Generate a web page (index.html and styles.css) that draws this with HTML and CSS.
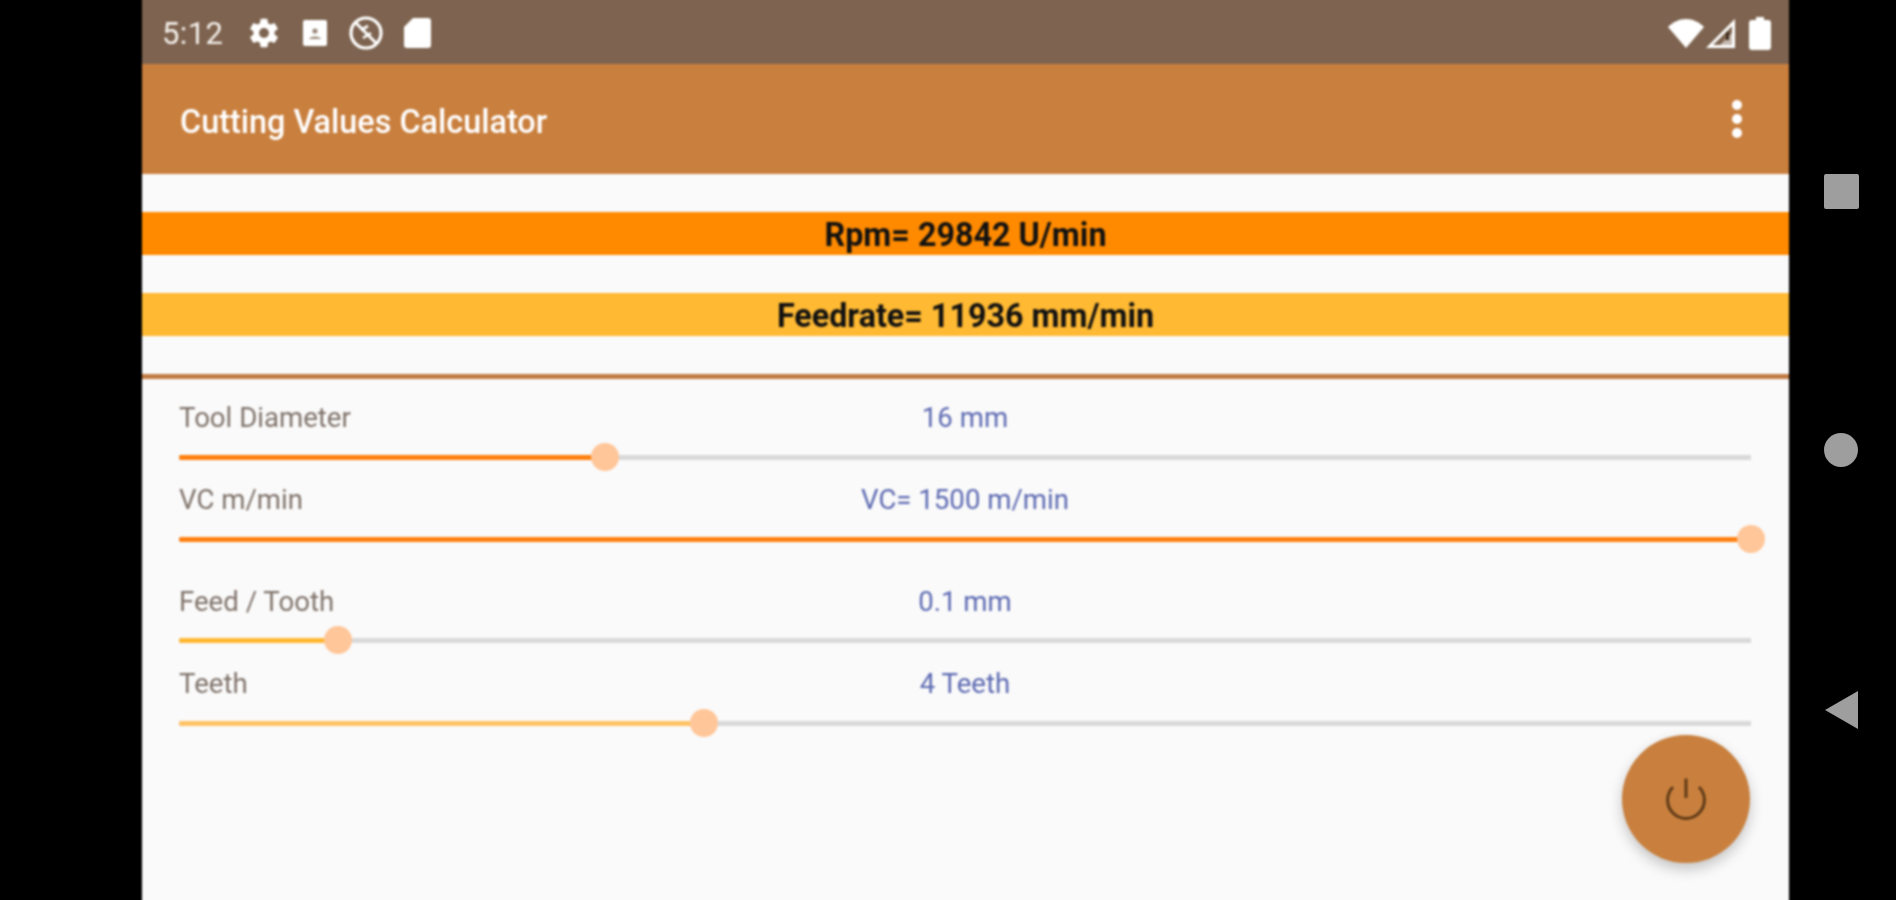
FILE: index.html
```html
<!DOCTYPE html>
<html lang="en">
<head>
<meta charset="utf-8">
<title>Cutting Values Calculator</title>
<link rel="stylesheet" href="styles.css">
</head>
<body>
<div class="device">
  <main class="screen">
    <header class="status">
      <span class="clock">5:12</span>
      <svg class="ic ic-gear" viewBox="0 0 24 24"><path fill="#fff" d="M19.4 13c.04-.32.1-.65.1-1s-.06-.68-.1-1l2.1-1.65c.2-.15.25-.42.12-.64l-2-3.46c-.12-.22-.39-.3-.61-.22l-2.49 1c-.52-.4-1.08-.73-1.69-.98l-.38-2.65A.49.49 0 0 0 14 2h-4c-.25 0-.46.18-.49.42l-.38 2.65c-.61.25-1.17.59-1.69.98l-2.49-1c-.23-.09-.49 0-.61.22l-2 3.46c-.13.22-.07.49.12.64L4.57 11c-.04.32-.07.65-.07 1s.03.68.07 1l-2.11 1.65c-.19.15-.25.42-.12.64l2 3.46c.12.22.39.3.61.22l2.49-1c.52.4 1.08.73 1.69.98l.38 2.65c.03.24.24.42.49.42h4c.25 0 .46-.18.49-.42l.38-2.65c.61-.25 1.17-.59 1.69-.98l2.49 1c.23.09.49 0 .61-.22l2-3.46c.12-.22.07-.49-.12-.64L19.4 13zM12 15.500a3.500 3.500 0 1 1 0-7 3.500 3.500 0 0 1 0 7z"/></svg>
      <svg class="ic ic-box" viewBox="0 0 24 26"><rect width="24" height="26" rx="2" fill="#fff"/><circle cx="12" cy="11" r="2.6" fill="#9a8a7c"/><path d="M6 19c1-3.500 11-3.500 12 0z" fill="#9a8a7c"/></svg>
      <svg class="ic ic-nope" viewBox="0 0 34 34"><g fill="none" stroke="#fff"><circle cx="17" cy="17" r="15" stroke-width="3.2"/><path d="M7 7l20 20" stroke-width="3"/><path d="M12 14l7-4M14 22l8-5" stroke-width="2.6"/></g></svg>
      <svg class="ic ic-sd" viewBox="0 0 27 30"><path fill="#fff" d="M9 0h15a3 3 0 0 1 3 3v24a3 3 0 0 1-3 3H3a3 3 0 0 1-3-3V9z"/></svg>
      <span class="status-gap"></span>
      <svg class="ic ic-wifi" viewBox="0 0 36 29"><path fill="#fff" d="M18 29 0 8C5 3 11 0 18 0s13 3 18 8z"/></svg>
      <svg class="ic ic-signal" viewBox="0 0 29 29"><path fill="none" stroke="#fff" stroke-width="3" d="M3.500 27.500 27.500 3.500v24z"/><path fill="#fff" d="M13 27 26 14v13z" opacity=".55"/><path fill="#3d2a1c" d="M20 13h3v8h-3z"/></svg>
      <svg class="ic ic-batt" viewBox="0 0 22 33"><path fill="#fff" d="M7 0h8v3h4a3 3 0 0 1 3 3v24a3 3 0 0 1-3 3H3a3 3 0 0 1-3-3V6a3 3 0 0 1 3-3h4z"/></svg>
    </header>

    <div class="appbar">
      <h1 class="title">Cutting Values Calculator</h1>
      <div class="menu"><i></i><i></i><i></i></div>
    </div>

    <section class="results">
      <div class="result result-rpm">Rpm= 29842 U/min</div>
      <div class="result result-feed">Feedrate= 11936 mm/min</div>
    </section>

    <section class="controls">
      <div class="row row-first">
        <div class="row-head"><span class="label">Tool Diameter</span><span class="value">16 mm</span><span></span></div>
        <div class="slider slider-orange"><div class="fill" style="width:27.1%"><span class="thumb"></span></div></div>
      </div>
      <div class="row">
        <div class="row-head"><span class="label">VC m/min</span><span class="value">VC= 1500 m/min</span><span></span></div>
        <div class="slider slider-orange"><div class="fill" style="width:100%"><span class="thumb"></span></div></div>
      </div>
      <div class="row row-spaced">
        <div class="row-head"><span class="label">Feed / Tooth</span><span class="value">0.1 mm</span><span></span></div>
        <div class="slider slider-yellow"><div class="fill" style="width:10.1%"><span class="thumb"></span></div></div>
      </div>
      <div class="row row-last">
        <div class="row-head"><span class="label">Teeth</span><span class="value">4 Teeth</span><span></span></div>
        <div class="slider slider-light"><div class="fill" style="width:33.4%"><span class="thumb"></span></div></div>
      </div>
    </section>

    <button class="fab" type="button" aria-label="Power">
      <svg viewBox="0 0 44 44" width="44" height="44"><g fill="none" stroke="#5f3a17" stroke-width="3"><path d="M22 1.500V21"/><path d="M9 10a18.400 18.400 0 1 0 26 0"/></g></svg>
    </button>
  </main>

  <nav class="nav">
    <span class="nav-square"></span>
    <span class="nav-circle"></span>
    <svg class="nav-back" viewBox="0 0 33 38"><path fill="#9e9e9e" d="M33 0v38L0 19z"/></svg>
  </nav>
</div>
</body>
</html>
```

FILE: styles.css
```css
* { box-sizing: border-box; }

html, body {
  margin: 0;
  height: 100%;
  background: #000;
  overflow: hidden;
}

body {
  font-family: Roboto, "Liberation Sans", sans-serif;
}

.device {
  display: flex;
  height: 900px;
  padding-left: 142px;
}

/* runs past the window top and bottom so the soft filter edge stays off-screen */
.screen {
  position: relative;
  flex: none;
  width: 1647px;
  height: 908px;
  margin-top: -4px;
  background: #fafafa;
  overflow: hidden;
  filter: blur(0.8px);
}

/* status bar */
.status {
  display: flex;
  align-items: center;
  height: 68px;
  padding: 6px 18px 0 20px;
  background: #7e6450;
}

.clock {
  width: 66px;
  color: #f4efea;
  font-size: 31px;
  letter-spacing: 0.4px;
}

.ic { display: block; flex: none; }
.ic-gear { width: 34px; height: 34px; margin: 0 0 0 19px; }
.ic-box { width: 24px; height: 26px; margin-left: 22px; }
.ic-nope { width: 34px; height: 34px; margin-left: 22px; }
.ic-sd { width: 27px; height: 30px; margin-left: 21px; }
.status-gap { flex: 1; }
.ic-wifi { width: 36px; height: 29px; }
.ic-signal { width: 29px; height: 29px; margin-left: 2px; }
.ic-batt { width: 22px; height: 33px; margin-left: 14px; }

/* app bar */
.appbar {
  display: flex;
  align-items: center;
  justify-content: space-between;
  height: 110px;
  padding: 0 47px 0 38px;
  background: #c97f3d;
}

.title {
  margin: 0;
  padding-top: 5px;
  color: #fff;
  font-size: 32.4px;
  font-weight: 500;
}

.menu {
  display: flex;
  flex-direction: column;
  gap: 4px;
}

.menu i {
  display: block;
  width: 10px;
  height: 10px;
  border-radius: 50%;
  background: #fff;
}

/* result bands */
.results {
  display: flex;
  flex-direction: column;
  gap: 38px;
  padding: 38px 0;
  border-bottom: 5px solid #c17c45;
}

.result {
  height: 43px;
  padding-top: 2px;
  line-height: 43px;
  text-align: center;
  color: #111;
  font-size: 32.3px;
  font-weight: 700;
}

.result-rpm { background: #ff8a00; }
.result-feed { background: #ffb932; }

/* slider rows */
.controls {
  display: flex;
  flex-direction: column;
  padding: 0 38px 0 37px;
}

.row { margin-top: 13px; }
.row-first { margin-top: 23px; }
.row-spaced { margin-top: 33px; }
.row-last { margin-top: 14px; }
.row-spaced .slider { margin-top: 10px; }

.row-head {
  display: grid;
  grid-template-columns: 1fr auto 1fr;
  height: 30px;
  line-height: 32px;
  font-size: 27.6px;
}

.label { color: #80736b; }
.value { color: #5d6ab2; }

.slider {
  position: relative;
  height: 28px;
  margin-top: 11px;
  background: linear-gradient(#d9d9d9, #d9d9d9) 0 12px / 100% 5px no-repeat;
}

.fill {
  position: relative;
  top: 12px;
  height: 5px;
  border-radius: 2px;
}

.slider-orange .fill { background: #ff7f0e; }
.slider-yellow .fill { background: #ffb732; }
.slider-light .fill { background: #ffc264; }

.thumb {
  position: absolute;
  right: -14px;
  top: -12px;
  width: 28px;
  height: 28px;
  border-radius: 50%;
  background: #ffc699;
}

/* floating button */
.fab {
  position: absolute;
  left: 1480px;
  top: 739px;
  display: flex;
  align-items: center;
  justify-content: center;
  width: 128px;
  height: 128px;
  padding: 0;
  border: 0;
  border-radius: 50%;
  background: #c9803e;
  box-shadow: 0 6px 14px rgba(0, 0, 0, 0.22);
}

/* navigation bar */
.nav {
  display: flex;
  flex: 1;
  flex-direction: column;
  align-items: center;
  gap: 224px;
  padding: 174px 3px 0 0;
}

.nav-square {
  width: 35px;
  height: 35px;
  border-radius: 2px;
  background: #9e9e9e;
}

.nav-circle {
  width: 34px;
  height: 34px;
  border-radius: 50%;
  background: #9e9e9e;
}

.nav-back {
  width: 33px;
  height: 38px;
  filter: blur(0.5px);
}
```
